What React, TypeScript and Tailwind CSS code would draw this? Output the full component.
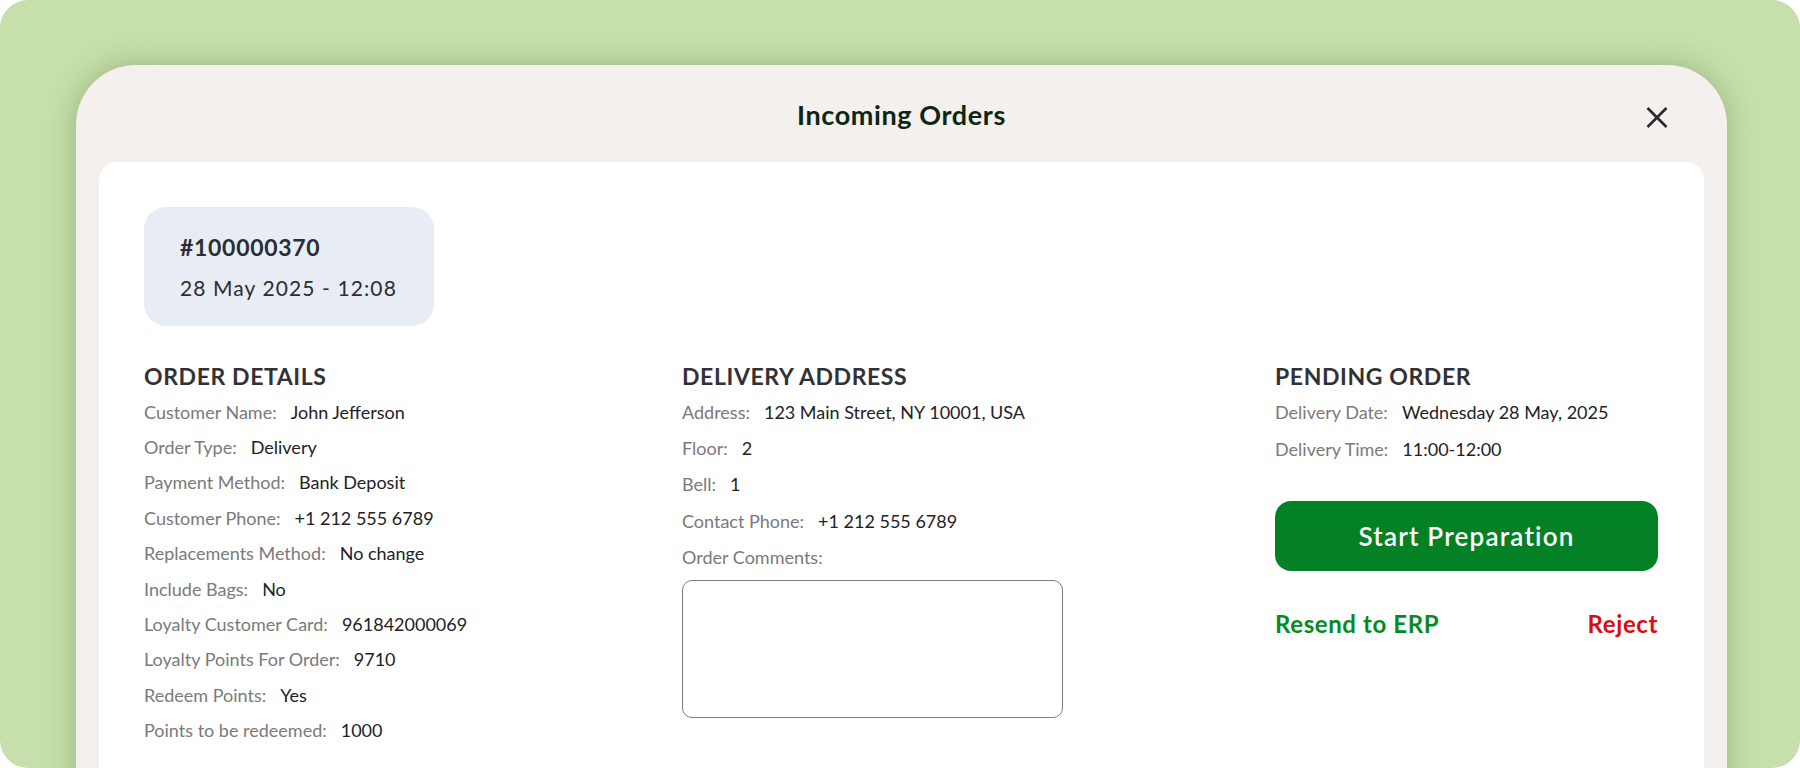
import React from 'react';

interface Row {
  label: string;
  value: string;
}

const orderDetails: Row[] = [
  { label: 'Customer Name:', value: 'John Jefferson' },
  { label: 'Order Type:', value: 'Delivery' },
  { label: 'Payment Method:', value: 'Bank Deposit' },
  { label: 'Customer Phone:', value: '+1 212 555 6789' },
  { label: 'Replacements Method:', value: 'No change' },
  { label: 'Include Bags:', value: 'No' },
  { label: 'Loyalty Customer Card:', value: '961842000069' },
  { label: 'Loyalty Points For Order:', value: '9710' },
  { label: 'Redeem Points:', value: 'Yes' },
  { label: 'Points to be redeemed:', value: '1000' },
];

const deliveryAddress: Row[] = [
  { label: 'Address:', value: '123 Main Street, NY 10001, USA' },
  { label: 'Floor:', value: '2' },
  { label: 'Bell:', value: '1' },
  { label: 'Contact Phone:', value: '+1 212 555 6789' },
];

const pendingOrder: Row[] = [
  { label: 'Delivery Date:', value: 'Wednesday 28 May, 2025' },
  { label: 'Delivery Time:', value: '11:00-12:00' },
];

const InfoRow: React.FC<Row & { h?: string }> = ({ label, value, h = 'h-[35.4px]' }) => (
  <div className={`flex items-center ${h} text-[18px] leading-[24px]`}>
    <span className="text-[#7a7a7a]">{label}</span>
    <span className="ml-[14px] text-[#222226]">{value}</span>
  </div>
);

const SectionTitle: React.FC<{ children: React.ReactNode }> = ({ children }) => (
  <h2 className="text-[23px] leading-[28px] font-bold text-[#323236] tracking-[0.6px]">{children}</h2>
);

const App: React.FC = () => {
  return (
    <div className="bg-white w-full h-[768px] overflow-hidden font-['Lato',sans-serif]">
      <div className="bg-[#c6dfab] h-[768px] rounded-[28px] overflow-hidden pt-[65px] pl-[76px]">
        <div className="w-[1651px] h-[760px] bg-[#f3f0ed] rounded-t-[60px] shadow-[0_0_28px_rgba(70,100,40,0.35)]">
          {/* header */}
          <div className="relative h-[97px] flex items-center justify-center pt-[4px]">
            <h1 className="text-[27px] font-bold text-[#0c2613] tracking-[0.6px]">Incoming Orders</h1>
            <button className="absolute right-[59px] top-[42px] text-[#2a2a2a]">
              <svg width="22" height="21" viewBox="0 0 22 21" fill="none" stroke="currentColor" strokeWidth="2.6">
                <path d="M1.5 1L20.5 20M20.5 1L1.5 20" />
              </svg>
            </button>
          </div>

          {/* card */}
          <div className="mx-[23px] bg-white rounded-[18px] h-[640px] pt-[45px] px-[45px]">
            <div className="w-[290px] h-[119px] bg-[#e8ecf5] rounded-[22px] pl-[36px] pt-[25px]">
              <div className="text-[23px] leading-[30px] font-bold text-[#2c2c34] tracking-[0.7px]">#100000370</div>
              <div className="mt-[11px] text-[21px] leading-[30px] text-[#2c2c34] tracking-[1.1px]">28 May 2025 - 12:08</div>
            </div>

            <div className="mt-[36px] grid grid-cols-[538px_593px_383px]">
              <div>
                <SectionTitle>ORDER DETAILS</SectionTitle>
                <div className="mt-[4px] flex flex-col">
                  {orderDetails.map((row) => (
                    <InfoRow key={row.label} {...row} />
                  ))}
                </div>
              </div>

              <div>
                <SectionTitle>DELIVERY ADDRESS</SectionTitle>
                <div className="mt-[4px] flex flex-col">
                  {deliveryAddress.map((row) => (
                    <InfoRow key={row.label} {...row} h="h-[36.2px]" />
                  ))}
                  <div className="flex items-center h-[36.2px] text-[18px] leading-[24px] text-[#7a7a7a]">Order Comments:</div>
                </div>
                <textarea className="mt-[5px] block w-[381px] h-[138px] border-[1.5px] border-[#7c7c7c] rounded-[10px] resize-none outline-none" />
              </div>

              <div>
                <SectionTitle>PENDING ORDER</SectionTitle>
                <div className="mt-[4px] flex flex-col">
                  {pendingOrder.map((row) => (
                    <InfoRow key={row.label} {...row} h="h-[36.7px]" />
                  ))}
                </div>
                <button className="mt-[34px] w-[383px] h-[70px] rounded-[16px] bg-[#048125] text-white text-[26px] font-semibold tracking-[1.2px]">
                  Start Preparation
                </button>
                <div className="mt-[38px] flex items-center justify-between text-[24px] leading-[30px] font-bold tracking-[0.6px]">
                  <button className="text-[#078a22]">Resend to ERP</button>
                  <button className="text-[#d90d0d]">Reject</button>
                </div>
              </div>
            </div>
          </div>
        </div>
      </div>
    </div>
  );
};

export default App;
